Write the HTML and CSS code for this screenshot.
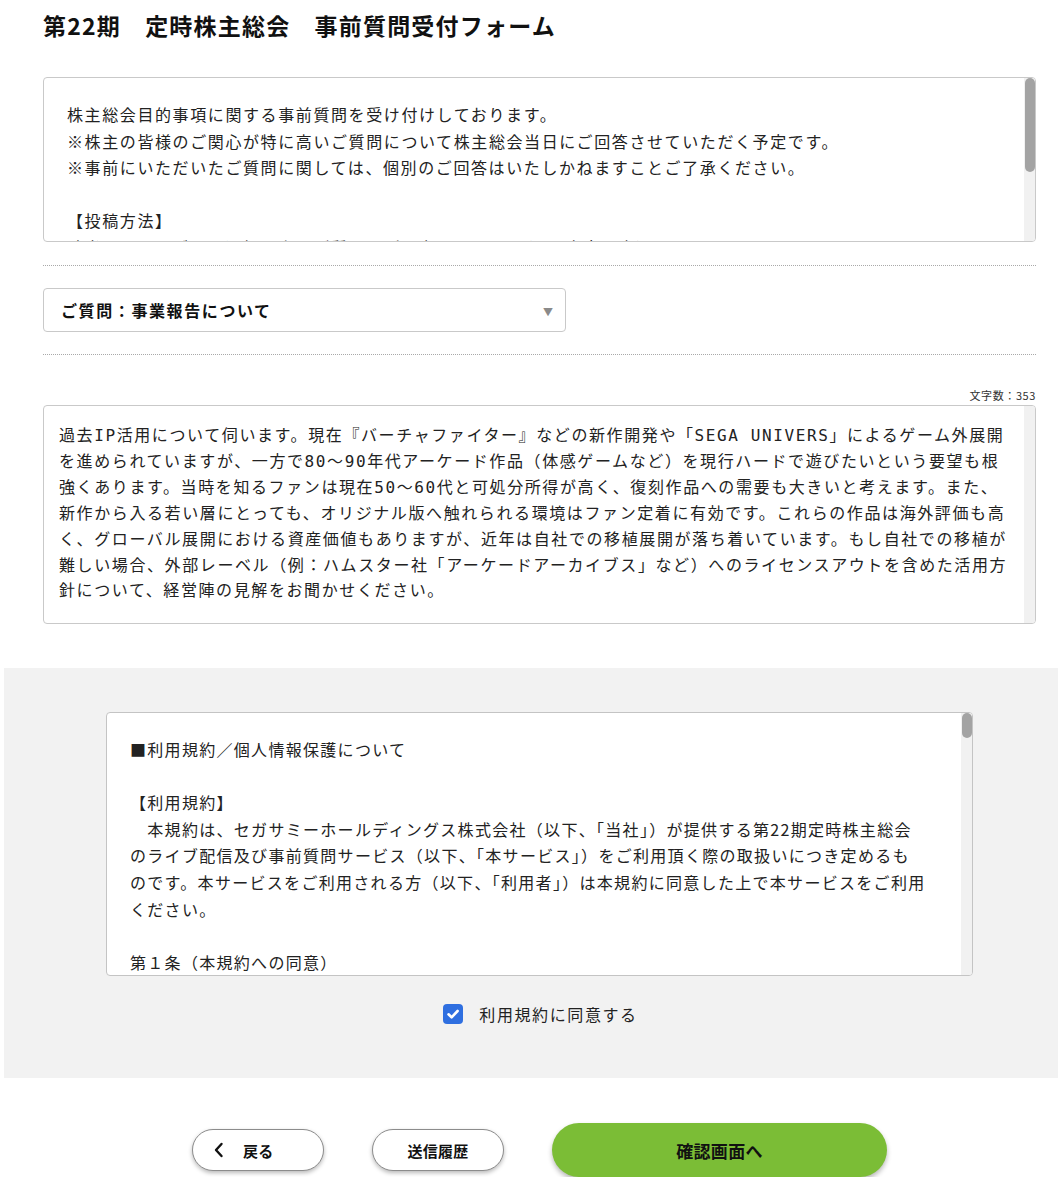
FILE: index.html
```html
<!DOCTYPE html>
<html lang="ja">
<head>
<meta charset="utf-8">
<title>第22期 定時株主総会 事前質問受付フォーム</title>
<link rel="stylesheet" href="styles.css">
</head>
<body>
<main class="page">
  <h1 class="title">第22期　定時株主総会　事前質問受付フォーム</h1>

  <div class="info-box">
    <div class="info-text">
      <p>株主総会目的事項に関する事前質問を受け付けしております。</p>
      <p>※株主の皆様のご関心が特に高いご質問について株主総会当日にご回答させていただく予定です。</p>
      <p>※事前にいただいたご質問に関しては、個別のご回答はいたしかねますことご了承ください。</p>
      <p class="blank">&nbsp;</p>
      <p>【投稿方法】</p>
      <p>該当するカテゴリを選択の上、ご質問をご入力ください。（400文字以内）</p>
    </div>
    <div class="scrollbar"><div class="thumb thumb-info"></div></div>
  </div>

  <hr class="sep sep-top">

  <div class="select">
    <span class="select-label">ご質問：事業報告について</span>
    <span class="select-arrow">▼</span>
  </div>

  <hr class="sep">

  <div class="counter">文字数：353</div>
  <div class="question">
    <div class="question-text">過去IP活用について伺います。現在『バーチャファイター』などの新作開発や「SEGA UNIVERS」によるゲーム外展開を進められていますが、一方で80〜90年代アーケード作品（体感ゲームなど）を現行ハードで遊びたいという要望も根強くあります。当時を知るファンは現在50〜60代と可処分所得が高く、復刻作品への需要も大きいと考えます。また、新作から入る若い層にとっても、オリジナル版へ触れられる環境はファン定着に有効です。これらの作品は海外評価も高く、グローバル展開における資産価値もありますが、近年は自社での移植展開が落ち着いています。もし自社での移植が難しい場合、外部レーベル（例：ハムスター社「アーケードアーカイブス」など）へのライセンスアウトを含めた活用方針について、経営陣の見解をお聞かせください。</div>
    <div class="scrollbar"></div>
  </div>
</main>

<section class="consent">
  <div class="terms-box">
    <div class="terms-text">
      <p>■利用規約／個人情報保護について</p>
      <p class="blank">&nbsp;</p>
      <p>【利用規約】</p>
      <p>　本規約は、セガサミーホールディングス株式会社（以下、「当社」）が提供する第22期定時株主総会<br>のライブ配信及び事前質問サービス（以下、「本サービス」）をご利用頂く際の取扱いにつき定めるも<br>のです。本サービスをご利用される方（以下、「利用者」）は本規約に同意した上で本サービスをご利用<br>ください。</p>
      <p class="blank">&nbsp;</p>
      <p>第１条（本規約への同意）</p>
    </div>
    <div class="scrollbar"><div class="thumb thumb-terms"></div></div>
  </div>
  <label class="agree">
    <span class="checkbox">
      <svg viewBox="0 0 20 20" width="20" height="20" aria-hidden="true">
        <path d="M5.5 10.3 L8.6 13.3 L14.6 7" fill="none" stroke="#fff" stroke-width="2.6" stroke-linecap="round" stroke-linejoin="round"/>
      </svg>
    </span>
    <span class="agree-label">利用規約に同意する</span>
  </label>
</section>

<nav class="actions">
  <button class="btn btn-white btn-back" type="button">
    <svg class="chev" viewBox="0 0 12 16" width="12" height="16" aria-hidden="true">
      <path d="M8.5 2 L3 8 L8.5 14" fill="none" stroke="#111" stroke-width="2.4" stroke-linecap="round" stroke-linejoin="round"/>
    </svg>
    <span>戻る</span>
  </button>
  <button class="btn btn-white" type="button">送信履歴</button>
  <button class="btn btn-green" type="button">確認画面へ</button>
</nav>
</body>
</html>
```
FILE: styles.css
```css
* { box-sizing: border-box; }

html, body {
  margin: 0;
  padding: 0;
  background: #fff;
}

body {
  font-family: "Noto Sans CJK JP", "Noto Sans", sans-serif;
  color: #222;
  width: 1058px;
  overflow: hidden;
}

p { margin: 0; }

.page {
  padding: 0 22px 0 43px;
}

.title {
  margin: 0;
  padding-top: 7px;
  height: 77px;
  font-size: 23px;
  font-weight: 700;
  letter-spacing: 1.2px;
  line-height: 36px;
  color: #111;
}

/* scrollable boxes: the bar is drawn over the box's right edge */
.info-box,
.question,
.terms-box {
  position: relative;
  overflow: hidden;
  border: 1px solid #c9c9c9;
  border-radius: 4px;
  background: #fff;
}

.scrollbar {
  position: absolute;
  top: 0;
  right: 0;
  bottom: 0;
  width: 11px;
  background: #f1f1f1;
}

.thumb {
  position: absolute;
  left: 1px;
  right: 0;
  top: 0;
  background: #a3a3a3;
  border-radius: 5px;
}

.thumb-info { height: 94px; }
.thumb-terms { height: 25px; }

.info-box {
  height: 165px;
}

.info-text {
  padding: 23px 23px 0;
  font-size: 16px;
  letter-spacing: 1.6px;
  line-height: 26.5px;
  color: #222;
}

.sep {
  margin: 22px 0;
  border: 0;
  border-top: 1px dotted #a9a9a9;
  height: 0;
}

.sep-top {
  margin-top: 23px;
}

.select {
  width: 523px;
  height: 44px;
  border: 1px solid #c9c9c9;
  border-radius: 4px;
  display: flex;
  align-items: center;
  justify-content: space-between;
  padding: 0 12px 0 17px;
  background: #fff;
}

.select-label {
  font-size: 16px;
  font-weight: 700;
  letter-spacing: 1.6px;
  color: #111;
}

.select-arrow {
  font-size: 10px;
  color: #8a8a8a;
  padding-top: 2px;
}

.counter {
  margin-top: 32px;
  text-align: right;
  font-size: 11px;
  letter-spacing: 0.6px;
  line-height: 16px;
  color: #333;
}

.question {
  margin-top: 2px;
  height: 219px;
  padding: 17px 22px 0 15px;
}

.question-text {
  font-family: "DejaVu Sans Mono", "Noto Sans CJK JP", monospace;
  font-size: 16px;
  letter-spacing: 1.6px;
  line-height: 25.9px;
  color: #222;
  word-break: break-all;
  line-break: anywhere;
}

/* grey consent panel */
.consent {
  margin: 44px 0 0 4px;
  height: 410px;
  background: #f2f2f2;
  padding: 44px 22px 0 39px;
}

.terms-box {
  width: 867px;
  height: 264px;
  margin: 0 auto;
  border-color: #c4c4c4;
}

.terms-text {
  padding: 23px 0 0 23px;
  font-size: 16px;
  letter-spacing: 1.3px;
  line-height: 26.6px;
  color: #222;
  white-space: nowrap;
}

.agree {
  display: flex;
  justify-content: center;
  align-items: center;
  gap: 16px;
  margin-top: 26px;
  padding-left: 2px;
}

.checkbox {
  width: 20px;
  height: 20px;
  border-radius: 4px;
  background: #2f6fe0;
  display: flex;
}

.agree-label {
  font-size: 16px;
  letter-spacing: 1.6px;
  color: #222;
}

/* bottom buttons */
.actions {
  display: flex;
  justify-content: center;
  align-items: center;
  gap: 48px;
  padding: 45px 22px 0 43px;
}

.btn {
  font-family: "Noto Sans CJK JP", "Noto Sans", sans-serif;
  font-weight: 700;
  color: #111;
  border-radius: 999px;
  cursor: pointer;
  display: flex;
  align-items: center;
  justify-content: center;
}

.btn-white {
  width: 132px;
  height: 42px;
  background: #fff;
  border: 1px solid #8c8c8c;
  box-shadow: 0 2px 4px rgba(0, 0, 0, 0.28);
  font-size: 15px;
  letter-spacing: 0.3px;
}

.btn-back {
  justify-content: flex-start;
  padding-left: 20px;
  gap: 18px;
}

.chev { display: block; }

.btn-green {
  width: 335px;
  height: 54px;
  background: #7bbd36;
  border: 0;
  box-shadow: 0 3px 5px rgba(0, 0, 0, 0.28);
  font-size: 17px;
  letter-spacing: 0.3px;
}
```
